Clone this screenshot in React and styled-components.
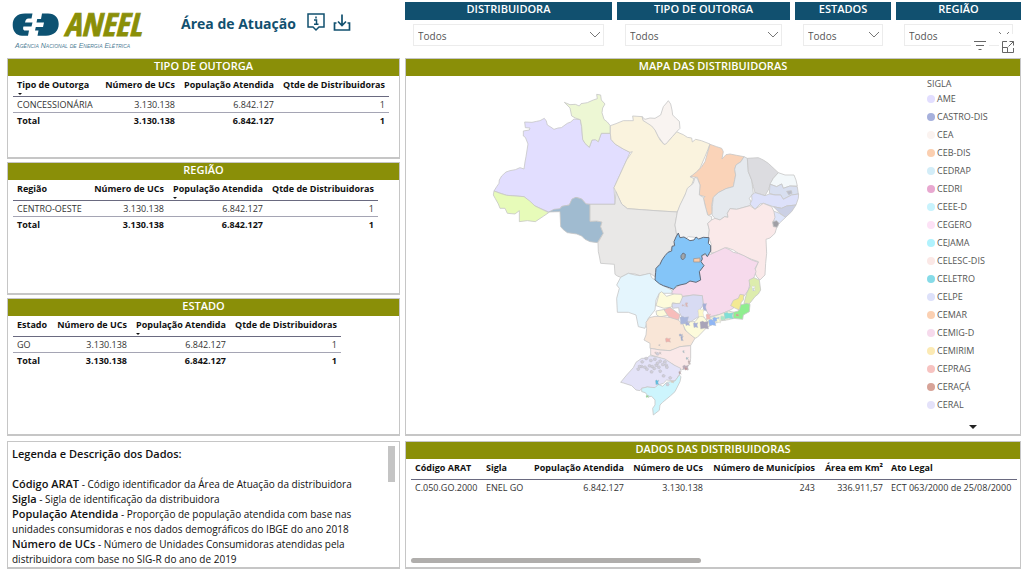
import React from 'react'
import styled, { createGlobalStyle } from 'styled-components'

const GlobalStyle = createGlobalStyle`
*{box-sizing:border-box;}
body{
margin:0;
background:#fff;
color:#111;
font-family:"Open Sans","Noto Sans",sans-serif;
font-size:9px;
}
`
const Page = styled.div`
min-height:100vh;
display:grid;
grid-template-columns:393fr 616fr;
grid-template-rows:58px 1fr 128px;
column-gap:5px;
padding:0 0 3px 7px;
`
const Header = styled.header`
display:flex;
align-items:flex-start;
`
const Logo = styled.svg`
width:140px;
height:40px;
margin:10px 0 0 4px;
overflow:visible;
`
const Title = styled.h1`
margin:13px 11px 0 30px;
font-size:14px;
line-height:22px;
font-weight:700;
color:#11506f;
`
const IconButton = styled.button`
width:18px;
height:20px;
margin:12px 8px 0 0;
padding:0;
border:0;
background:none;
color:#11506f;
svg{display:block;}
`
const Filters = styled.div`
display:grid;
grid-template-columns:207fr 173fr 96fr 125fr;
column-gap:5px;
padding-top:2px;
`
const Filter = styled.div`
display:flex;
flex-direction:column;
`
const FilterLabel = styled.label`
height:18px;
background:#11506f;
color:#fff;
font-size:11px;
line-height:14px;
font-weight:600;
text-align:center;
`
const SelectBox = styled.div`
position:relative;
margin:4px 8px 0;
svg{position:absolute;right:3px;top:7px;pointer-events:none;}
`
const Select = styled.select`
appearance:none;
display:block;
width:100%;
height:22px;
padding:2px 4px 0;
border:1px solid #ececec;
border-radius:0;
background:#fff;
color:#555;
font-family:inherit;
font-size:10px;
`
const Stack = styled.div`
display:grid;
grid-template-rows:101fr 133fr 138fr;
row-gap:3px;
margin-bottom:5px;
`
const Panel = styled.section`
position:relative;
display:flex;
flex-direction:column;
min-width:0;
border:1px solid #c6c6c6;
border-bottom-width:2px;
background:#fff;
`
const MapPanel = styled(Panel)`
margin-bottom:5px;
`
const PanelTitle = styled.h2`
height:17px;
margin:0;
background:#8a8f08;
color:#fff;
font-size:11px;
line-height:14px;
font-weight:600;
text-align:center;
`
const Table = styled.table`
width:${p => p.$width}px;
max-width:100%;
margin-left:5px;
table-layout:fixed;
border-collapse:collapse;
white-space:nowrap;
`
const Th = styled.th`
position:relative;
height:20px;
padding:1px 4px 4px;
border-bottom:1px solid #6a6a80;
font-weight:700;
line-height:15px;
text-align:${p => p.$num ? 'right' : 'left'};
`
const Sort = styled.span`
position:absolute;
left:5px;
bottom:1px;
border:2px solid transparent;
border-top-color:#111;
border-bottom:0;
`
const Td = styled.td`
height:16px;
padding:0 4px;
border-top:${p => p.$total ? '1px solid #a5a5b4' : '0'};
color:${p => p.$total ? '#111' : '#333'};
font-weight:${p => p.$total ? 700 : 400};
line-height:15px;
text-align:${p => p.$num ? 'right' : 'left'};
`
const Notes = styled(Panel)`
padding:4px 30px 0 4px;
font-size:10px;
line-height:15px;
overflow:hidden;
p{margin:0;}
h3{margin:0 0 16px;font-size:11px;line-height:15px;font-weight:600;}
b{font-size:11px;line-height:11px;font-weight:600;}
`
const NotesThumb = styled.div`
position:absolute;
right:4px;
top:4px;
width:7px;
height:36px;
background:#c4c4c4;
`
const TableThumb = styled.div`
width:290px;
height:5px;
margin:auto 0 4px 5px;
border-radius:3px;
background:#b0aeac;
`
const MapTools = styled.div`
position:absolute;
right:3px;
top:-25px;
display:flex;
gap:10px;
button{width:18px;height:20px;margin:0;padding-top:4px;background:#fff;color:#666;}
`
const MapBody = styled.div`
flex:1;
display:flex;
min-height:0;
padding-top:1px;
`
const MapSvg = styled.svg`
flex:1;
min-width:0;
min-height:0;
height:357px;
`
const Legend = styled.div`
display:flex;
flex-direction:column;
width:93px;
color:#555;
`
const LegendTitle = styled.div`
height:13px;
line-height:13px;
`
const LegendList = styled.ul`
margin:0;
padding:0;
list-style:none;
`
const LegendItem = styled.li`
display:flex;
align-items:center;
gap:2px;
height:18px;
line-height:18px;
`
const Dot = styled.span`
width:8px;
height:8px;
border-radius:50%;
background:${p => p.$color};
`
const More = styled.button`
width:8px;
height:4px;
margin:11px 0 0 42px;
padding:0;
border:4px solid transparent;
border-top-color:#222;
border-bottom:0;
background:none;
`

const filters = ['DISTRIBUIDORA', 'TIPO DE OUTORGA', 'ESTADOS', 'REGIÃO']

const legend = [
    ['AME', '#e2deff'], ['CASTRO-DIS', '#a6b0dc'], ['CEA', '#fbf3f0'], ['CEB-DIS', '#fbcfb0'],
    ['CEDRAP', '#d3edf8'], ['CEDRI', '#e8a8d0'], ['CEEE-D', '#c8f3fd'], ['CEGERO', '#fde2f6'],
    ['CEJAMA', '#b0f2fd'], ['CELESC-DIS', '#fbe8e6'], ['CELETRO', '#86dbe8'], ['CELPE', '#dde1fa'],
    ['CEMAR', '#fbd0b2'], ['CEMIG-D', '#f6daec'], ['CEMIRIM', '#fceab4'], ['CEPRAG', '#f7c3c1'],
    ['CERAÇÁ', '#d7a398'], ['CERAL', '#e4e2fa'],
]

// outlines are in thirds of a pixel, one group per part of the map
const north = [
    ['#e2deff', '42 333 50 320 57 310 58 300 65 288 78 276 90 272 106 269 120 263 132 267 135 246 138 230 144 192 136 172 130 168 130 153 148 150 150 144 136 143 134 126 156 127 170 124 180 122 193 115 199 123 202 135 212 141 222 148 234 144 244 143 262 130 272 126 282 117 301 119 305 140 308 178 315 190 328 202 336 180 346 179 355 185 364 160 392 160 393 178 405 192 430 207 450 217 440 240 402 323 405 373 330 373 318 372 305 357 288 352 276 360 268 375 244 380 240 388 206 396 165 378 132 350 80 346'],
    ['#edf7d4', '253 67 270 74 286 73 298 78 303 71 322 68 340 60 352 56 350 43 362 45 364 60 375 72 368 84 366 98 372 118 382 126 391 137 391 160 364 160 355 185 346 179 336 180 328 202 315 190 308 178 305 140 301 119 286 114 275 108 270 84'],
    ['#faf3de', '391 137 408 131 430 122 447 122 460 122 458 108 487 110 490 122 505 128 520 135 528 155 540 180 552 193 568 180 590 155 600 160 610 164 622 172 635 174 637 186 647 178 664 182 690 192 684 208 675 230 660 265 645 284 630 290 642 296 635 315 615 345 592 396 540 393 442 386 425 372 412 345 402 323 440 240 457 215 450 217 430 207 405 192 393 178 391 160'],
    ['#e7fbb9', '42 333 60 340 80 346 132 350 148 362 165 378 206 398 190 409 166 425 142 422 118 425 118 392 105 402 82 400 75 385 60 385 55 372 46 356 40 345'],
    ['#a0bbd0', '206 396 222 388 240 386 246 379 268 375 276 357 288 352 305 357 318 372 330 373 330 424 350 423 366 426 362 440 370 460 352 488 330 485 315 478 305 468 290 462 262 458 250 449 242 440 240 395'],
    ['#e9e8e7', '330 373 405 373 408 335 425 372 442 386 540 393 592 396 585 435 590 465 582 493 565 520 540 550 528 565 525 590 510 580 495 584 480 587 465 582 445 580 422 592 412 588 405 583 403 553 362 550 358 528 355 515 354 488 370 460 362 440 366 426 350 423 330 424'],
]
const northeast = [
    ['#f9f4f1', '6 110 15 118 30 114 45 115 62 105 70 80 77 72 85 62 92 72 96 90 98 105 109 116 118 124 120 145 110 155 97 170 88 180 78 192 72 193 55 170 45 150 35 138 10 122'],
    ['#fad3b8', '210 193 230 200 245 205 250 215 246 237 258 224 270 222 290 226 312 230 303 245 288 255 284 268 287 285 280 320 258 326 235 338 220 352 215 375 217 400 205 407 198 390 195 375 190 355 195 350 178 345 180 315 172 292 152 290 170 275 184 262 195 245'],
    ['#f2f1f1', '165 292 172 295 180 315 178 345 190 352 195 375 203 405 215 410 215 420 203 430 208 450 205 473 188 480 175 480 165 472 145 470 135 478 122 474 110 465 105 435 112 396 120 375 135 345 142 325 160 310'],
    ['#e5e9ee', '312 230 322 235 325 275 335 300 340 340 328 355 335 370 330 377 290 388 270 386 262 400 264 412 254 410 240 420 225 415 216 405 217 380 220 352 235 338 258 326 280 320 287 285 284 268 288 255 303 245'],
    ['#dcdce0', '322 235 355 233 370 240 385 250 415 278 400 295 390 315 385 330 375 347 345 338 340 320 335 300 325 275'],
    ['#f3f8fa', '415 278 435 285 462 285 468 300 472 318 450 318 430 325 425 312 410 320 390 312 400 295'],
    ['#d8dff0', '390 313 410 320 425 312 430 325 450 318 472 320 475 342 455 345 430 358 422 345 405 345 388 340'],
    ['#dde1fa', '335 345 345 338 375 347 388 342 405 345 422 345 430 358 455 345 476 342 475 355 468 375 440 378 425 385 400 380 370 370 360 372 345 388 330 372 336 360'],
    ['#cbd0e5', '400 380 425 385 440 378 468 375 455 395 437 412 420 400'],
    ['#dee5fa', '398 392 418 400 437 412 418 430 412 438 400 425'],
    ['#fae9e9', '203 430 215 420 225 415 240 420 254 410 264 412 262 400 270 386 290 388 330 377 345 388 370 370 395 380 402 395 405 412 398 430 410 443 405 460 390 474 378 478 380 520 377 550 375 585 360 600 350 590 343 575 350 558 355 545 335 538 315 530 295 520 280 510 260 503 240 512 225 517 213 520 213 490 205 473 208 450'],
    ['#9f9fa5', '398 425 410 422 417 430 412 442 400 440'],
    ['#b9bccb', '440 334 454 332 456 340 446 344'],
]
const south = [
    ['#e4f5fd', '62 157 85 145 105 150 120 152 150 145 155 158 165 165 190 182 215 195 218 205 178 205 168 225 165 255 145 280 135 310 115 305 108 270 85 262 52 262 50 220 58 190 50 180'],
    ['#f6daec', '332 88 345 82 360 75 375 68 390 75 400 82 415 85 432 92 455 105 475 112 465 130 468 140 463 155 452 170 445 195 435 210 425 218 405 225 400 250 385 258 360 268 330 275 318 255 310 240 307 212 280 210 240 215 215 205 220 193 240 180 270 168 302 165 298 140 312 122 303 110 305 92'],
    ['#ddedad', '447 165 462 158 478 165 482 195 475 207 465 215 455 228 445 240 432 235 440 205 450 185'],
    ['#f3f3dc', '320 308 340 297 365 287 385 284 400 280 402 262 385 258 360 268 335 276 322 280 308 290'],
    ['#90ee90', '420 240 440 235 450 238 448 260 430 270 428 283 400 280 400 262 415 258'],
    ['#f3e993', '400 226 415 220 420 208 432 210 430 225 424 232 418 255 406 250 392 242'],
    ['#fdfbdb', '178 205 185 200 200 214 222 207 245 208 250 225 242 230 248 240 218 233 215 246 192 250 168 242'],
    ['#fdfbdb', '168 258 195 253 205 270 180 276 170 270'],
    ['#f7bdbb', '192 254 210 247 225 258 240 270 235 287 218 282 204 273'],
    ['#d8dbf3', '248 215 280 210 307 212 310 240 295 260 300 272 285 282 270 292 250 285 238 262 236 248 218 250 216 236 240 235'],
    ['#fdfbdb', '248 298 262 290 285 290 300 272 312 276 322 290 320 308 292 337 285 340 262 326'],
    ['#f9e6d7', '148 278 165 274 190 275 212 278 235 285 250 300 255 315 270 328 285 340 272 362 240 365 225 372 210 377 180 375 150 370 150 355 132 345 138 330 140 310 138 292'],
    ['#fae8e8', '152 370 180 375 210 377 240 365 272 362 272 400 268 420 245 435 232 430 222 420 195 405 170 395 152 390'],
    ['#e4e3f8', '62 472 80 450 100 428 108 412 125 400 140 400 150 392 175 397 195 402 210 412 222 420 242 430 238 450 225 468 200 465 190 475 175 480 165 490 142 486 125 490 120 497 108 495 95 482 70 474'],
    ['#cdf5fd', '125 490 142 486 165 488 175 478 188 484 200 472 225 468 238 450 243 455 240 470 225 500 212 512 200 522 188 532 180 540 178 556 160 570 158 550 165 540 165 525 155 514 145 515 136 503 125 500'],
]
const goias = '228 36 235 24 240 38 252 36 262 42 270 47 282 45 288 36 296 42 310 37 327 38 325 55 332 62 332 78 322 95 316 86 305 92 307 102 303 110 312 122 298 140 302 165 288 172 270 168 258 176 240 180 230 183 220 193 208 188 190 182 178 176 165 165 167 142 168 130 180 118 186 105 195 92 204 82 215 78 216 64 224 62 222 50'

const patches = [
    ['#a9b6dc', 240, 274, 26, 24], ['#a4aed8', 256, 290, 14, 12], ['#a4aed8', 280, 292, 14, 16],
    ['#a8a4b8', 300, 288, 26, 24], ['#8fb6f5', 326, 282, 22, 20], ['#8fb6f5', 338, 276, 20, 14],
    ['#fdfbdb', 350, 280, 12, 14], ['#f3b7b4', 318, 266, 14, 18], ['#a4aed8', 308, 234, 12, 24],
    ['#fdf8c9', 294, 252, 18, 24], ['#7fdfd6', 372, 262, 28, 20], ['#a8e8c8', 362, 272, 14, 14],
    ['#d78b78', 408, 266, 10, 8], ['#e0b0b0', 256, 232, 8, 14], ['#d9b0b8', 246, 238, 8, 6],
    ['#9ca8cc', 237, 326, 12, 8], ['#9ca8cc', 242, 332, 8, 16], ['#f0b0a8', 196, 338, 16, 14],
    ['#b8a8a8', 176, 358, 5, 5], ['#8fb0bc', 248, 376, 6, 8], ['#fff', 456, 182, 10, 16],
    ['#a8d8e8', 458, 188, 5, 10], ['#c8b0b0', 164, 380, 6, 6], ['#c8b0b0', 178, 380, 6, 8],
    ['#5cbce0', 166, 464, 11, 16], ['#7ed87e', 138, 510, 9, 8], ['#f0c8a0', 214, 468, 8, 6],
    ['#bbaab8', 248, 420, 18, 14], ['#c08c90', 254, 426, 10, 10], ['#98b8c4', 258, 396, 8, 8],
    ['#c0a8a8', 264, 406, 8, 12], ['#b89ca0', 236, 438, 8, 10],
]
const specks = [
    [134, 398], [148, 404], [160, 400], [176, 406], [190, 408], [122, 408], [120, 422], [130, 424],
    [144, 420], [152, 422], [164, 418], [172, 424], [184, 416], [194, 418], [110, 430], [136, 430],
    [158, 428], [176, 436], [196, 424], [150, 438], [114, 422], [186, 450], [168, 412], [198, 476],
    [206, 456], [168, 384],
]

function Region({ x, y, shapes, children }) {
    return (
        <g transform={`translate(${x} ${y}) scale(0.3333)`} stroke="#c6c6c6" strokeWidth="2.4" strokeLinejoin="round">
            {shapes.map(([fill, points], i) => <polygon key={i} fill={fill} points={points} />)}
            {children}
        </g>
    )
}

function BrazilMap() {
    return (
        <MapSvg viewBox="406 77 521 357" preserveAspectRatio="xMinYMin meet" role="img" aria-label="Mapa das distribuidoras">
            <Region x={480} y={80} shapes={north} />
            <Region x={640} y={80} shapes={northeast} />
            <Region x={600} y={225} shapes={south}>
                {patches.map(([fill, x, y, w, h], i) => (
                    <polygon key={i} fill={fill} strokeWidth="1" points={`${x},${y + 3} ${x + w / 3},${y} ${x + w / 2},${y + 3} ${x + w},${y + 1} ${x + w - 3},${y + h / 2} ${x + w},${y + h} ${x + w / 2},${y + h - 2} ${x + 2},${y + h}`} />
                ))}
                {specks.map(([x, y], i) => (
                    <path key={i} d={`M${x} ${y}l6 -2l4 4l-3 5l-6 -1z`} fill="#d0cfd8" stroke="#b2b0bc" strokeWidth="1" />
                ))}
                <polygon points={goias} fill="#84c5f8" stroke="#626a78" strokeWidth="3" />
                <polygon points="243,92 249,84 256,88 255,98 248,105 243,99" fill="#a0a6aa" stroke="#626a78" />
                <polygon points="281,101 300,99 300,111 281,111" fill="#fbc9a5" stroke="#999" />
            </Region>
        </MapSvg>
    )
}

function AneelLogo() {
    return (
        <Logo viewBox="11 10 140 40" role="img" aria-label="ANEEL">
            <path d="M32.500 13.500H25C17 13.500 12.700 18 12.700 25C12.700 31 16 35.700 22 35.700H28L29 30.500H25C23 30.500 22.800 28 23.500 26.500H31.500L32.500 22.500H25C25.500 20 26.500 18.500 28.500 18.500H31.500Z" fill="#0d5272" />
            <path d="M42 13.500H48C55 13.500 58.700 18 58.700 24C58.700 31 54 35.700 46 35.700H37.500L38.500 30.500H35L35.800 27H43L44 22.500H36.500L37.200 19H41Z" fill="#0d5272" />
            <text x="64" y="36" fill="#8a8f08" stroke="#8a8f08" strokeWidth="0.8" fontFamily='"Liberation Sans Narrow","Open Sans Condensed","Liberation Sans",sans-serif' fontSize="32" fontWeight="700" fontStyle="italic">ANEEL</text>
            <text x="15" y="48" fill="#4d7c94" fontFamily='"Liberation Sans",sans-serif' fontSize="7" fontStyle="italic" style={{ fontVariant: 'small-caps' }}>Agência Nacional de Energia Elétrica</text>
        </Logo>
    )
}

function DataTable({ widths, heads, rows, total, textCols = [0], sort }) {
    const isNum = i => !textCols.includes(i)
    return (
        <Table $width={widths.reduce((a, b) => a + b, 0)}>
            <colgroup>{widths.map((w, i) => <col key={i} width={w} />)}</colgroup>
            <thead>
                <tr>{heads.map((h, i) => <Th key={h} scope="col" $num={isNum(i)}>{h}{sort === i && <Sort />}</Th>)}</tr>
            </thead>
            <tbody>
                {rows.map((r, n) => <tr key={n}>{r.map((c, i) => <Td key={i} $num={isNum(i)}>{c}</Td>)}</tr>)}
                {total && <tr>{total.map((c, i) => <Td key={i} $num={isNum(i)} $total>{c}</Td>)}</tr>}
            </tbody>
        </Table>
    )
}

function SummaryPanel({ title, field, value, first, sort }) {
    return (
        <Panel>
            <PanelTitle>{title}</PanelTitle>
            <DataTable
                widths={[first, 79, 99, 111]}
                heads={[field, 'Número de UCs', 'População Atendida', 'Qtde de Distribuidoras']}
                rows={[[value, '3.130.138', '6.842.127', '1']]}
                total={['Total', '3.130.138', '6.842.127', '1']}
                sort={sort}
            />
        </Panel>
    )
}

function App() {
    return (
        <Page>
            <GlobalStyle />
            <Header>
                <AneelLogo />
                <Title>Área de Atuação</Title>
                <IconButton aria-label="Informações">
                    <svg width="18" height="20" viewBox="0 0 18 20" fill="none" stroke="currentColor" strokeWidth="1.5">
                        <path d="M1 2H17V15H12L9 18L6 15H1Z" />
                        <path d="M9 4.5V6.5M7 8H9.5V12M7 12.3H11.5" />
                    </svg>
                </IconButton>
                <IconButton aria-label="Baixar">
                    <svg width="18" height="20" viewBox="0 0 18 20" fill="none" stroke="currentColor" strokeWidth="1.7">
                        <path d="M3.500 11H1.500V18H16.500V11H14.500M9 2.500V13.500M5 9.500L9 13.500L13 9.500" />
                    </svg>
                </IconButton>
            </Header>
            <Filters>
                {filters.map((name, i) => (
                    <Filter key={name}>
                        <FilterLabel htmlFor={`filter${i}`}>{name}</FilterLabel>
                        <SelectBox>
                            <Select id={`filter${i}`}><option>Todos</option></Select>
                            <svg width="12" height="8" viewBox="0 0 12 8" fill="none" stroke="#777"><path d="M1 1L6 6L11 1" /></svg>
                        </SelectBox>
                    </Filter>
                ))}
            </Filters>
            <Stack>
                <SummaryPanel title="TIPO DE OUTORGA" field="Tipo de Outorga" value="CONCESSIONÁRIA" first={87} sort={0} />
                <SummaryPanel title="REGIÃO" field="Região" value="CENTRO-OESTE" first={76} sort={2} />
                <SummaryPanel title="ESTADO" field="Estado" value="GO" first={39} sort={2} />
            </Stack>
            <MapPanel>
                <PanelTitle>MAPA DAS DISTRIBUIDORAS</PanelTitle>
                <MapTools>
                    <IconButton aria-label="Filtros">
                        <svg width="18" height="16" viewBox="0 0 18 16" stroke="currentColor"><path d="M3 3.500H15M5 7.500H13M7.500 11.500H10.500" /></svg>
                    </IconButton>
                    <IconButton aria-label="Modo de foco">
                        <svg width="18" height="16" viewBox="0 0 18 16" fill="none" stroke="currentColor">
                            <path d="M8 3.500H3.500V14.500H14.500V10M3.500 9.500H8.500V14.500M10.500 3.500H14.500V7.500M14.500 3.500L9.500 8.500" />
                        </svg>
                    </IconButton>
                </MapTools>
                <MapBody>
                    <BrazilMap />
                    <Legend>
                        <LegendTitle>SIGLA</LegendTitle>
                        <LegendList>
                            {legend.map(([name, color]) => <LegendItem key={name}><Dot $color={color} />{name}</LegendItem>)}
                        </LegendList>
                        <More aria-label="Mais itens" />
                    </Legend>
                </MapBody>
            </MapPanel>
            <Notes>
                <h3>Legenda e Descrição dos Dados:</h3>
                <p><b>Código ARAT</b> - Código identificador da Área de Atuação da distribuidora</p>
                <p><b>Sigla</b> - Sigla de identificação da distribuidora</p>
                <p><b>População Atendida</b> - Proporção de população atendida com base nas unidades consumidoras e nos dados demográficos do IBGE do ano 2018</p>
                <p><b>Número de UCs</b> - Número de Unidades Consumidoras atendidas pela distribuidora com base no SIG-R do ano de 2019</p>
                <NotesThumb />
            </Notes>
            <Panel>
                <PanelTitle>DADOS DAS DISTRIBUIDORAS</PanelTitle>
                <DataTable
                    widths={[71, 47, 99, 79, 112, 68, 130]}
                    heads={['Código ARAT', 'Sigla', 'População Atendida', 'Número de UCs', 'Número de Municípios', 'Área em Km²', 'Ato Legal']}
                    rows={[['C.050.GO.2000', 'ENEL GO', '6.842.127', '3.130.138', '243', '336.911,57', 'ECT 063/2000 de 25/08/2000']]}
                    textCols={[0, 1, 6]}
                />
                <TableThumb />
            </Panel>
        </Page>
    )
}

export default App
